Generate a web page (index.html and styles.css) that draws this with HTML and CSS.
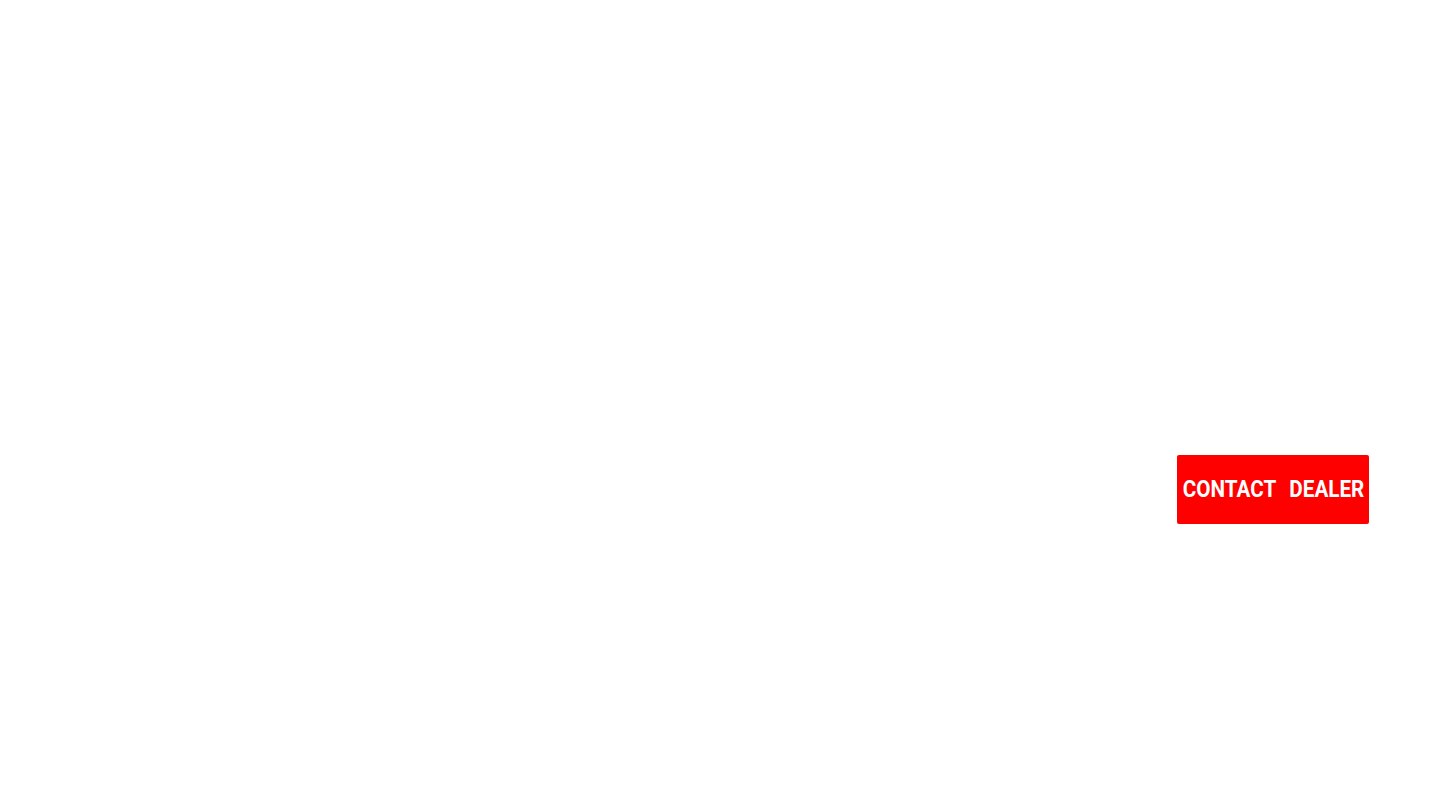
FILE: index.html
```html
<!DOCTYPE html>
<html>
<head>
<meta charset="utf-8">
<link rel="stylesheet" href="styles.css">
</head>
<body>
<div class="page">
  <div class="cta-row">
    <a class="cta" href="#"><span class="cta-label">CONTACT DEALER</span></a>
  </div>
</div>
</body>
</html>
```
FILE: styles.css
```css
html, body {
  margin: 0;
  padding: 0;
  background: #fff;
}
.page {
  width: 1440px;
  height: 807px;
  box-sizing: border-box;
  padding-top: 455px;
}
.cta-row {
  display: flex;
  justify-content: flex-end;
  padding-right: 71px;
}
.cta {
  display: flex;
  align-items: center;
  justify-content: center;
  box-sizing: border-box;
  width: 192px;
  height: 69px;
  padding-bottom: 2px;
  background: #ff0000;
  border-radius: 2px;
  color: #fff;
  text-decoration: none;
  font-family: Roboto, "Liberation Sans", sans-serif;
  font-weight: 700;
  font-size: 24px;
  white-space: nowrap;
}
.cta-label {
  display: inline-block;
  transform: scaleX(0.86);
  word-spacing: 10px;
  margin-left: 2px;
}
```
